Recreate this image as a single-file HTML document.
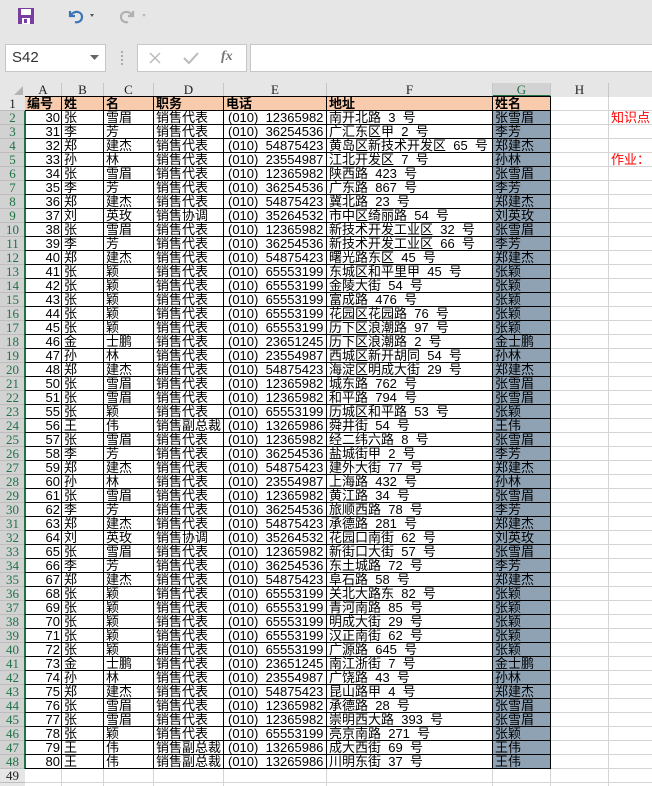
<!DOCTYPE html>
<html><head><meta charset="utf-8">
<style>
body{margin:0;width:652px;height:786px;overflow:hidden;background:#e6e6e6;position:relative;font-family:"Liberation Sans","Noto Sans CJK SC",sans-serif}
.a{position:absolute;box-sizing:border-box}
.c{position:absolute;box-sizing:border-box;height:15px;font-size:13px;line-height:14px;white-space:nowrap;overflow:visible;padding-left:2px;color:#000}
.ch{position:absolute;top:83px;height:14px;font:13px/14px "Liberation Serif",serif;text-align:center;border-right:1px solid #c6c6c6;color:#222;box-sizing:border-box}
.rh{position:absolute;left:0;width:25px;height:14px;font:13px/14px "Liberation Serif",serif;text-align:center;color:#217346;background:#d2d2d2;border-bottom:1px solid #bdbdbd;box-sizing:border-box}
</style></head><body>
<svg class="a" style="left:17px;top:7px" width="18" height="18" viewBox="0 0 18 18"><rect x="1" y="1" width="16" height="16" fill="#7a3f9e"/><rect x="4" y="2" width="10" height="6" fill="#fff"/><rect x="5" y="11" width="8" height="6" fill="#fff"/><rect x="7" y="12" width="3" height="4" fill="#7a3f9e"/></svg>
<svg class="a" style="left:66px;top:7px" width="30" height="18" viewBox="0 0 30 18"><path d="M4 4 L4 9 L9 9" fill="none" stroke="#3a74b6" stroke-width="2.2"/><path d="M4.5 8.5 C8 3 16 4 16 10 C16 14 12 16 9 15" fill="none" stroke="#3a74b6" stroke-width="2.2"/><path d="M24 7 l4 0 l-2 3z" fill="#555"/></svg>
<svg class="a" style="left:117px;top:7px" width="30" height="18" viewBox="0 0 30 18"><path d="M16 4 L16 9 L11 9" fill="none" stroke="#b0b0b0" stroke-width="2.2"/><path d="M15.5 8.5 C12 3 4 4 4 10 C4 14 8 16 11 15" fill="none" stroke="#b0b0b0" stroke-width="2.2"/><path d="M25 7 l4 0 l-2 3z" fill="#bbb"/></svg>
<div class="a" style="left:5px;top:44px;width:101px;height:28px;background:#fff;border:1px solid #c6c6c6;font-size:15px;line-height:26px;padding-left:6px;color:#333">S42</div>
<svg class="a" style="left:90px;top:55px" width="10" height="6"><path d="M0 0h9l-4.5 5z" fill="#666"/></svg>
<div class="a" style="left:121px;top:51px;width:2px;height:14px;border-left:2px dotted #aaa"></div>
<div class="a" style="left:137px;top:44px;width:110px;height:28px;background:#fff;border:1px solid #c6c6c6"></div>
<svg class="a" style="left:149px;top:52px" width="12" height="12"><path d="M1 1L11 11M11 1L1 11" stroke="#bbb" stroke-width="1.5"/></svg>
<svg class="a" style="left:183px;top:51px" width="16" height="14"><path d="M1 7L6 12L15 2" fill="none" stroke="#bbb" stroke-width="2"/></svg>
<div class="a" style="left:221px;top:49px;font:italic bold 14px 'Liberation Serif',serif;color:#777">fx</div>
<div class="a" style="left:250px;top:44px;width:410px;height:28px;background:#fff;border:1px solid #c6c6c6"></div>
<div class="a" style="left:25px;top:97px;width:627px;height:689px;background:#fff"></div>
<svg class="a" style="left:14px;top:86px" width="9" height="9"><path d="M9 0V9H0z" fill="#b4b4b4"/></svg>
<div id="g"></div>
<script>
var cols=[[25,62,'A'],[62,104,'B'],[104,154,'C'],[154,224,'D'],[224,327,'E'],[327,493,'F'],[493,551,'G'],[551,609,'H'],[609,700,'I']];
var h='';
cols.forEach(function(c){h+='<div class="ch" style="left:'+c[0]+'px;width:'+(c[1]-c[0])+'px;'+(c[2]=='G'?'background:#d2d2d2;color:#217346;border-bottom:2px solid #217346;':'')+'">'+c[2]+'</div>';});
var T=97,R=14;
for(var r=0;r<49;r++){h+='<div class="a" style="left:25px;top:'+(T+r*R+R-1)+'px;width:627px;height:1px;background:#d4d4d4"></div>';}
cols.forEach(function(c){h+='<div class="a" style="left:'+(c[1]-1)+'px;top:97px;width:1px;height:689px;background:#d4d4d4"></div>';});
for(var r=1;r<=49;r++){var sel=r>=2&&r<=48;h+='<div class="rh" style="top:'+(T+(r-1)*R)+'px;'+(sel?'':'background:#e6e6e6;color:#222;')+'">'+r+'</div>';}
h+='<div class="a" style="left:24px;top:111px;width:2px;height:658px;background:#217346"></div>';
var d="30 张 雪眉 销售代表 12365982 南开北路_3_号|31 李 芳 销售代表 36254536 广汇东区甲_2_号|32 郑 建杰 销售代表 54875423 黄岛区新技术开发区_65_号|33 孙 林 销售代表 23554987 江北开发区_7_号|34 张 雪眉 销售代表 12365982 陕西路_423_号|35 李 芳 销售代表 36254536 广东路_867_号|36 郑 建杰 销售代表 54875423 冀北路_23_号|37 刘 英玫 销售协调 35264532 市中区绮丽路_54_号|38 张 雪眉 销售代表 12365982 新技术开发工业区_32_号|39 李 芳 销售代表 36254536 新技术开发工业区_66_号|40 郑 建杰 销售代表 54875423 曙光路东区_45_号|41 张 颖 销售代表 65553199 东城区和平里甲_45_号|42 张 颖 销售代表 65553199 金陵大街_54_号|43 张 颖 销售代表 65553199 富成路_476_号|44 张 颖 销售代表 65553199 花园区花园路_76_号|45 张 颖 销售代表 65553199 历下区浪潮路_97_号|46 金 士鹏 销售代表 23651245 历下区浪潮路_2_号|47 孙 林 销售代表 23554987 西城区新开胡同_54_号|48 郑 建杰 销售代表 54875423 海淀区明成大街_29_号|50 张 雪眉 销售代表 12365982 城东路_762_号|51 张 雪眉 销售代表 12365982 和平路_794_号|55 张 颖 销售代表 65553199 历城区和平路_53_号|56 王 伟 销售副总裁 13265986 舜井街_54_号|57 张 雪眉 销售代表 12365982 经二纬六路_8_号|58 李 芳 销售代表 36254536 盐城街甲_2_号|59 郑 建杰 销售代表 54875423 建外大街_77_号|60 孙 林 销售代表 23554987 上海路_432_号|61 张 雪眉 销售代表 12365982 黄江路_34_号|62 李 芳 销售代表 36254536 旅顺西路_78_号|63 郑 建杰 销售代表 54875423 承德路_281_号|64 刘 英玫 销售协调 35264532 花园口南街_62_号|65 张 雪眉 销售代表 12365982 新街口大街_57_号|66 李 芳 销售代表 36254536 东土城路_72_号|67 郑 建杰 销售代表 54875423 阜石路_58_号|68 张 颖 销售代表 65553199 关北大路东_82_号|69 张 颖 销售代表 65553199 青河南路_85_号|70 张 颖 销售代表 65553199 明成大街_29_号|71 张 颖 销售代表 65553199 汉正南街_62_号|72 张 颖 销售代表 65553199 广源路_645_号|73 金 士鹏 销售代表 23651245 南江浙街_7_号|74 孙 林 销售代表 23554987 广饶路_43_号|75 郑 建杰 销售代表 54875423 昆山路甲_4_号|76 张 雪眉 销售代表 12365982 承德路_28_号|77 张 雪眉 销售代表 12365982 崇明西大路_393_号|78 张 颖 销售代表 65553199 亮京南路_271_号|79 王 伟 销售副总裁 13265986 成大西街_69_号|80 王 伟 销售副总裁 13265986 川明东街_37_号".split('|');
h+='<div class="a" style="left:25px;top:97px;width:526px;height:14px;background:#f8cbad"></div>';
h+='<div class="a" style="left:493px;top:111px;width:58px;height:658px;background:#8fa2b4"></div>';
function cell(ci,r,txt,extra){var c=cols[ci];return '<div class="c" style="left:'+c[0]+'px;top:'+(T+(r-1)*R)+'px;width:'+(c[1]-c[0])+'px;'+(extra||'')+'">'+txt+'</div>';}
var hd=['编号','姓','名','职务','电话','地址','姓名'];
hd.forEach(function(t,i){h+=cell(i,1,t,'font-weight:bold');});
d.forEach(function(s,i){var p=s.split(' '),r=i+2;
h+=cell(0,r,p[0],'text-align:right;padding-right:2px');
h+=cell(1,r,p[1]);h+=cell(2,r,p[2]);h+=cell(3,r,p[3]);
h+=cell(4,r,'(010)&nbsp;&nbsp;'+p[4],'padding-left:4px');
h+=cell(5,r,p[5].replace(/_/g,'&nbsp;&nbsp;'));
h+=cell(6,r,p[1]+p[2]);});
for(var r=0;r<=48;r++){h+='<div class="a" style="left:25px;top:'+(T+r*R-1)+'px;width:526px;height:1px;background:#000"></div>';}
cols.slice(0,7).forEach(function(c){h+='<div class="a" style="left:'+(c[1]-1)+'px;top:96px;width:1px;height:673px;background:#000"></div>';});
h+='<div class="c" style="left:609px;top:111px;color:#f00">知识点：</div>';
h+='<div class="c" style="left:609px;top:153px;color:#f00">作业：&nbsp;作</div>';
document.getElementById('g').innerHTML=h;
</script>
</body></html>
